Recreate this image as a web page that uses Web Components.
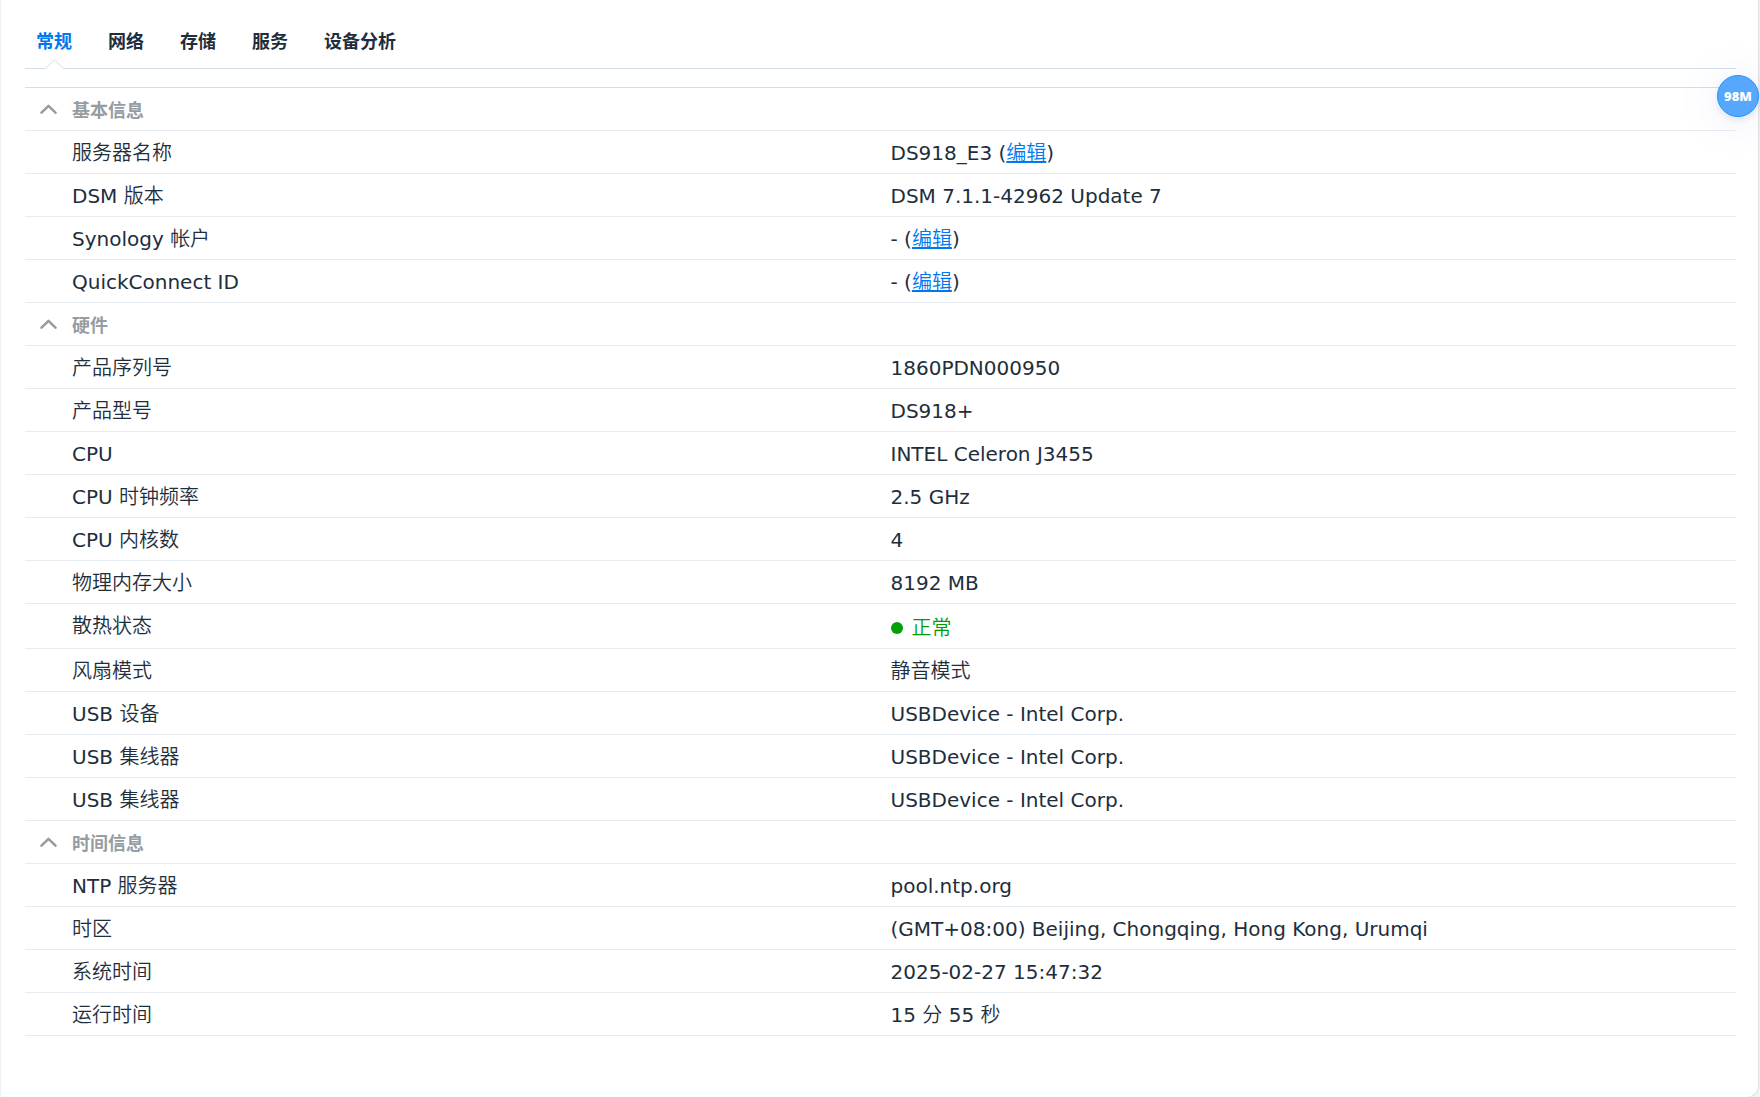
<!DOCTYPE html>
<html lang="zh-CN">
<head>
<meta charset="utf-8">
<title>信息中心</title>
<style>
html,body{margin:0;background:#f4f4f5}
body{font-family:"DejaVu Sans","Noto Sans CJK SC DemiLight","Noto Sans CJK SC Light","Noto Sans CJK SC",sans-serif;color:#1e2e3c}
</style>
</head>
<body>
<info-window>
  <tab-strip slot="tabs"></tab-strip>
  <info-section data-key="basic"></info-section>
  <info-section data-key="hardware"></info-section>
  <info-section data-key="time"></info-section>
</info-window>
<memory-badge>98M</memory-badge>
<script>
const edit = '(<a href="#edit">编辑</a>)';
const sections = {
  basic: ['基本信息', [
    ['服务器名称', 'DS918_E3 ' + edit],
    ['DSM 版本', 'DSM 7.1.1-42962 Update 7'],
    ['Synology 帐户', '- ' + edit],
    ['QuickConnect ID', '- ' + edit]]],
  hardware: ['硬件', [
    ['产品序列号', '1860PDN000950'],
    ['产品型号', 'DS918+'],
    ['CPU', 'INTEL Celeron J3455'],
    ['CPU 时钟频率', '2.5 GHz'],
    ['CPU 内核数', '4'],
    ['物理内存大小', '8192 MB'],
    ['散热状态', '<status-dot>正常</status-dot>'],
    ['风扇模式', '静音模式'],
    ['USB 设备', 'USBDevice - Intel Corp.'],
    ['USB 集线器', 'USBDevice - Intel Corp.'],
    ['USB 集线器', 'USBDevice - Intel Corp.']]],
  time: ['时间信息', [
    ['NTP 服务器', 'pool.ntp.org'],
    ['时区', '(GMT+08:00) Beijing, Chongqing, Hong Kong, Urumqi'],
    ['系统时间', '2025-02-27 15:47:32'],
    ['运行时间', '15 分 55 秒']]]
};

class Base extends HTMLElement {
  connectedCallback() {
    if (!this.shadowRoot) this.attachShadow({mode: 'open'}).innerHTML = this.render();
  }
}

customElements.define('info-window', class extends Base {
  render() {
    return `<style>
      :host{display:block;margin-right:2px}
      .card{box-sizing:border-box;min-height:100vh;background:#fff;border-left:1px solid #eff3f8;
        border-radius:0 0 12px 0;padding:14px 22px 40px 24px;box-shadow:0 0 2px 1px #dedede}
      .body{margin-top:18px;border-top:1px solid #d2dfe9}
    </style>
    <main class="card"><slot name="tabs"></slot><div class="body"><slot></slot></div></main>`;
  }
});

customElements.define('tab-strip', class extends Base {
  render() {
    const tabs = ['常规', '网络', '存储', '服务', '设备分析'];
    return `<style>
      :host{display:block}
      nav{display:flex;gap:36px;padding:0 11px;height:54px;border-bottom:1px solid #d2dfe9}
      button{position:relative;border:0;padding:0;background:none;font:700 18px/52px "Noto Sans CJK SC",sans-serif;
        height:54px;padding-bottom:2px;color:#1e2e3c;cursor:pointer}
      button[aria-selected=true]{color:#0078f0}
      svg{position:absolute;left:50%;bottom:-1px;margin-left:-9px;display:block}
    </style>
    <nav role="tablist">${tabs.map((t, i) =>
      `<button role="tab" aria-selected="${i === 0}">${t}${i ? '' :
        '<svg width="19" height="10" viewBox="0 0 19 10"><path d="M.5 9.5L9.500 .8l9 8.700v.5H.5z" fill="#fff"/><path d="M0 9.500h.5L9.500 .8l9 8.700h.5" fill="none" stroke="#d2dfe9"/></svg>'}</button>`).join('')}</nav>`;
  }
});

customElements.define('status-dot', class extends Base {
  render() {
    return `<style>
      :host{display:flex;align-items:center;gap:9px;color:#009a05;padding-top:2px}
      i{width:12px;height:12px;border-radius:50%;background:#04a00a}
    </style><i></i><slot></slot>`;
  }
});

customElements.define('info-section', class extends Base {
  render() {
    const [title, rows] = sections[this.dataset.key];
    return `<style>
      :host{display:block}
      h2{margin:0;border-bottom:1px solid #e7ecf2}
      button{display:flex;align-items:center;gap:15px;width:100%;height:42px;border:0;padding:0 15px;background:none;
        font:700 18px/42px "Noto Sans CJK SC",sans-serif;color:#959ca2;text-align:left;cursor:pointer}
      table{width:100%;table-layout:fixed;border-collapse:separate;border-spacing:0;font-size:20px;line-height:24px}
      th,td{box-sizing:border-box;height:43px;padding:10px 10px 8px;border-bottom:1px solid #e7ecf2;font-weight:400;
        text-align:left;vertical-align:top;white-space:nowrap}
      th{padding-left:47px;width:50%}
      .text{display:block;height:24px}
      td .text:has(status-dot){height:26px}
      a{color:#0078f0;text-decoration:underline}
    </style>
    <h2><button aria-expanded="true"><svg width="17" height="10" viewBox="0 0 17 10"><path d="M1.500 8.700L8.500 1.800l7 6.900" fill="none" stroke="#959ca2" stroke-width="2.500" stroke-linecap="round" stroke-linejoin="round"/></svg>${title}</button></h2>
    <table><tbody>${rows.map(([k, v]) =>
      `<tr><th scope="row"><span class="text">${k}</span></th><td><span class="text">${v}</span></td></tr>`).join('')}</tbody></table>`;
  }
});

customElements.define('memory-badge', class extends Base {
  render() {
    return `<style>
      :host{position:absolute;top:75px;right:1px;box-sizing:border-box;width:42px;height:42px;border-radius:50%;
        border:1px solid #1e98fb;background:#57a7ff;color:#fff;font:800 13px/41px "Open Sans",sans-serif;text-align:center;
        box-shadow:0 3px 6px rgba(60,60,140,.12),0 4px 40px 6px rgba(120,120,230,.08)}
    </style><slot></slot>`;
  }
});
</script>
</body>
</html>
